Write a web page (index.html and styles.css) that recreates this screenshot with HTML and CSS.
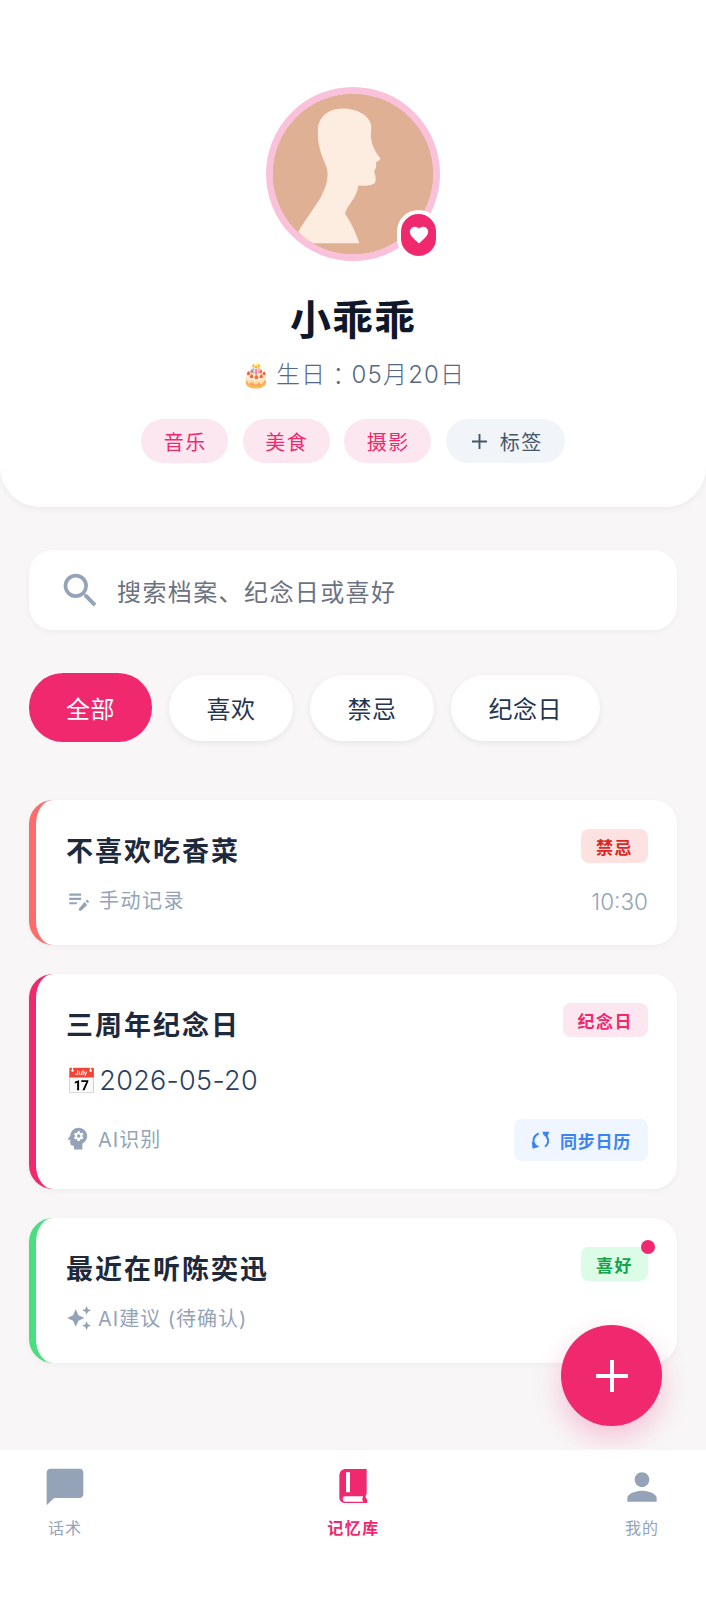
FILE: index.html
```html
<!DOCTYPE html>
<html lang="zh-CN">
<head>
<meta charset="utf-8">
<title>记忆库</title>
<link rel="stylesheet" href="styles.css">
</head>
<body>
<div class="app">
  <header class="hero">
    <div class="avatar">
      <svg class="avatar-art" viewBox="220 102 478 478">
        <rect x="220" y="102" width="478" height="478" fill="#dfb094"/>
        <path fill="#fcede0" d="M430 145C385 145 355 170 354 210C353 250 362 280 378 315C390 345 380 380 360 415C345 440 315 480 296 513C310 535 325 548 340 548H478C465 510 450 480 435 460C440 435 470 415 475 375C490 376 515 378 524 368C530 358 525 345 522 332C530 325 528 312 528 305C535 303 542 298 540 293C530 280 518 262 514 240C510 225 516 205 512 190C505 165 470 145 430 145Z"/>
      </svg>
      <span class="avatar-badge">
        <svg class="badge-heart" viewBox="0 0 24 24"><path fill="#fff" d="M12 21.35l-1.45-1.32C5.4 15.36 2 12.28 2 8.5 2 5.42 4.42 3 7.5 3c1.74 0 3.41.81 4.5 2.09C13.09 3.81 14.76 3 16.5 3 19.58 3 22 5.42 22 8.5c0 3.78-3.4 6.86-8.55 11.54L12 21.35z"/></svg>
      </span>
    </div>
    <h1 class="name">小乖乖</h1>
    <p class="birthday"><span class="emoji">🎂</span>生日<span class="colon">：</span>05月20日</p>
    <div class="tags">
      <span class="tag">音乐</span>
      <span class="tag">美食</span>
      <span class="tag">摄影</span>
      <span class="tag tag-add"><svg class="tag-plus" viewBox="0 0 16 16"><path d="M8 0v16M0 8h16" stroke="#475569" stroke-width="2" fill="none"/></svg>标签</span>
    </div>
  </header>

  <main class="content">
    <div class="search">
      <svg class="search-icon" viewBox="0 0 24 24"><path fill="#94a3b8" d="M15.5 14h-.79l-.28-.27A6.471 6.471 0 0 0 16 9.5 6.5 6.5 0 1 0 9.5 16c1.61 0 3.09-.59 4.23-1.57l.27.28v.79l5 4.99L20.49 19l-4.99-5zm-6 0C7.01 14 5 11.99 5 9.5S7.01 5 9.5 5 14 7.01 14 9.5 11.99 14 9.5 14z"/></svg>
      <span class="search-text">搜索档案、纪念日或喜好</span>
    </div>

    <div class="filters">
      <span class="filter filter-active">全部</span>
      <span class="filter">喜欢</span>
      <span class="filter">禁忌</span>
      <span class="filter">纪念日</span>
    </div>

    <div class="cards">
      <article class="card card-red">
        <div class="row">
          <h2 class="card-title">不喜欢吃香菜</h2>
          <span class="pill pill-red">禁忌</span>
        </div>
        <div class="row meta-row">
          <span class="source"><svg class="source-icon" viewBox="0 0 24 24"><path fill="#94a3b8" d="M3 10h11v2H3zm0-2h11V6H3zm0 8h7v-2H3zm15.01-3.13.71-.71c.39-.39 1.02-.39 1.41 0l.71.71c.39.39.39 1.02 0 1.41l-.71.71zm-.71.71L12 19.88V22h2.12l5.3-5.3z"/></svg><span class="source-text-manual">手动记录</span></span>
          <span class="time">10:30</span>
        </div>
      </article>

      <article class="card card-pink card-tall">
        <div class="row">
          <h2 class="card-title">三周年纪念日</h2>
          <span class="pill pill-pink">纪念日</span>
        </div>
        <p class="date"><span class="date-emoji">📅</span>2026-05-20</p>
        <div class="row foot-row">
          <span class="source source-raised"><svg class="source-icon source-icon-lg" viewBox="0 0 24 24"><path fill="#94a3b8" fill-rule="evenodd" d="M13 3C9.25 3 6.2 5.94 6.02 9.64L4.1 12.2c-.25.33-.01.8.4.8H6v3c0 1.1.9 2 2 2h1v3h7v-4.68c2.36-1.12 4-3.53 4-6.32 0-3.87-3.13-7-7-7zm3 7c0 .13-.01.26-.02.39l.83.66c.08.06.1.16.05.25l-.8 1.39c-.05.09-.16.12-.24.09l-.99-.4c-.21.16-.43.29-.67.39L14 13.83c-.01.1-.1.17-.2.17h-1.6c-.1 0-.18-.07-.2-.17l-.15-1.06c-.25-.1-.47-.23-.68-.39l-.99.4c-.09.03-.2 0-.25-.09l-.8-1.39c-.05-.08-.03-.19.05-.25l.84-.66c-.01-.13-.02-.26-.02-.39s.02-.27.04-.4l-.85-.66c-.08-.06-.1-.16-.05-.26l.8-1.38c.05-.09.15-.12.24-.09l1 .4c.2-.15.43-.29.67-.39L12 6.17c.02-.1.1-.17.2-.17h1.6c.1 0 .19.07.2.17l.15 1.06c.24.1.46.23.67.39l1-.4c.09-.03.2 0 .24.09l.8 1.38c.05.09.03.2-.05.26l-.85.66c.03.13.04.26.04.39z"/><circle cx="13" cy="10" r="1.43" fill="#94a3b8"/></svg>AI识别</span>
          <span class="sync"><svg class="sync-icon" viewBox="155 993 57 57"><path d="M178 1000C162 1008 158 1022 167 1036M192 1000C208 1010 212 1028 197 1040" fill="none" stroke="#3b82f6" stroke-width="6"/><path d="M157 1025 160 1046 180 1040ZM188 995 210 995 203 1012Z" fill="#3b82f6"/></svg>同步日历</span>
        </div>
      </article>

      <article class="card card-green">
        <div class="row">
          <h2 class="card-title">最近在听陈奕迅</h2>
          <span class="pill pill-green">喜好<span class="pill-dot"></span></span>
        </div>
        <div class="row meta-row">
          <span class="source source-ai"><svg class="source-icon" viewBox="0 0 24 24"><path fill="#94a3b8" d="M19 9l1.25-2.75L23 5l-2.75-1.25L19 1l-1.250 2.75L15 5l2.75 1.25zm-7.5.5L9 4 6.500 9.500 1 12l5.500 2.500L9 20l2.500-5.500L17 12zM19 15l-1.250 2.750L15 19l2.750 1.250L19 23l1.250-2.750L23 19l-2.750-1.250z"/></svg>AI建议 (待确认)</span>
        </div>
      </article>
    </div>
  </main>

  <button class="fab" type="button"><svg class="fab-plus" viewBox="0 0 32 32"><path d="M16 0v32M0 16h32" stroke="#fff" stroke-width="4" fill="none"/></svg></button>

  <nav class="tabbar">
    <div class="tab">
      <svg class="tab-icon" viewBox="0 0 24 24"><path fill="#94a3b8" d="M20 2H4c-1.100 0-2 .9-2 2v18l4-4h14c1.100 0 2-.9 2-2V4c0-1.100-.9-2-2-2z"/></svg>
      <span class="tab-label">话术</span>
    </div>
    <div class="tab tab-active">
      <svg class="tab-icon" viewBox="96 73 132 132"><path fill="#f0286e" fill-rule="evenodd" d="M138 85H200V160C197 163 196 167 197 170L202 178 201 187H135C124 187 118 180 118 170V105C118 93 126 85 138 85ZM138 95V155H150V95ZM136 167C130 167 128 170 128 175C128 180 131 183 136 183H190C186 178 186 172 190 167Z"/></svg>
      <span class="tab-label">记忆库</span>
    </div>
    <div class="tab">
      <svg class="tab-icon" viewBox="0 0 24 24"><path fill="#94a3b8" d="M12 12c2.210 0 4-1.790 4-4s-1.790-4-4-4-4 1.790-4 4 1.790 4 4 4zm0 2c-2.670 0-8 1.340-8 4v2h16v-2c0-2.660-5.330-4-8-4z"/></svg>
      <span class="tab-label">我的</span>
    </div>
  </nav>
</div>
</body>
</html>
```
FILE: styles.css
```css
* { box-sizing: border-box; }
html, body { margin: 0; padding: 0; }
body {
  font-family: "Inter", "Noto Sans CJK SC", "Noto Sans", sans-serif;
  background: #f8f6f7;
  color: #0f172a;
}
.app {
  position: relative;
  width: 706px;
  height: 1600px;
  display: flex;
  flex-direction: column;
  overflow: hidden;
}
.hero {
  height: 507px;
  padding-top: 87px;
  background: #fff;
  border-radius: 0 0 40px 40px;
  box-shadow: 0 2px 6px rgba(15, 23, 42, .05);
  display: flex;
  flex-direction: column;
  align-items: center;
}
.avatar {
  position: relative;
  width: 174px;
  height: 174px;
  border: 7px solid #f9c2da;
  border-radius: 50%;
  background: #dfb094;
}
.avatar-art {
  display: block;
  width: 160px;
  height: 160px;
  border-radius: 50%;
}
.avatar-badge {
  position: absolute;
  left: 124px;
  top: 116px;
  width: 43px;
  height: 50px;
  border: 4px solid #fff;
  border-radius: 22px;
  background: #f0286e;
  display: flex;
  align-items: center;
  justify-content: center;
}
.badge-heart { width: 22px; height: 22px; }
.name {
  margin: 32px 0 0;
  font-size: 41px;
  line-height: 54px;
  font-weight: 700;
  letter-spacing: 1px;
  color: #0f172a;
}
.birthday {
  margin: 12px 0 0;
  font-size: 24px;
  line-height: 32px;
  letter-spacing: 1.200px;
  font-weight: 300;
  color: #566a85;
  display: flex;
  align-items: center;
}
.colon { font-family: "Noto Sans CJK TC", sans-serif; }
.emoji { font-size: 24px; margin-right: 4px; }
.tags {
  display: flex;
  gap: 14.500px;
  margin-top: 28px;
}
.tag {
  height: 44px;
  padding: 0 21.500px 0 22.500px;
  border-radius: 22px;
  background: #fce7f0;
  color: #f0286e;
  font-size: 20px;
  letter-spacing: 1.500px;
  display: flex;
  align-items: center;
}
.tag-add {
  background: #f1f5f9;
  color: #475569;
  padding: 0 22px 0 26px;
}
.tag-plus { width: 15px; height: 15px; margin-right: 13px; }
.content {
  flex: 1;
  padding: 43px 29px 0;
}
.search {
  height: 80px;
  background: #fff;
  border-radius: 24px;
  box-shadow: 0 2px 6px rgba(15, 23, 42, .04);
  padding-left: 29px;
  display: flex;
  align-items: center;
}
.search-icon { width: 45px; height: 45px; flex: none; }
.search-text {
  margin-left: 14px;
  font-size: 24px;
  letter-spacing: 1.400px;
  color: #6b7280;
}
.filters {
  display: flex;
  align-items: center;
  gap: 17px;
  margin-top: 43px;
}
.filter {
  height: 66px;
  padding: 0 37.500px;
  border-radius: 33px;
  background: #fff;
  box-shadow: 0 2px 6px rgba(15, 23, 42, .07);
  font-size: 24px;
  letter-spacing: .500px;
  color: #243552;
  display: flex;
  align-items: center;
}
.filter-active {
  height: 69px;
  padding: 0 37px;
  border-radius: 34px;
  background: #f0286e;
  color: #fff;
  box-shadow: none;
}
.cards {
  display: flex;
  flex-direction: column;
  gap: 29px;
  margin-top: 58px;
}
.card {
  background: #fff;
  border-left: 7px solid;
  border-radius: 24px;
  box-shadow: 0 2px 6px rgba(15, 23, 42, .04);
  padding: 29px 29px 30px 30px;
}
.card-red { border-left-color: #ff6b6b; }
.card-pink { border-left-color: #f0286e; }
.card-green { border-left-color: #4ade80; }
.card-tall { padding-bottom: 28px; }
.row {
  display: flex;
  justify-content: space-between;
  align-items: flex-start;
}
.card-title {
  margin: 6px 0 -6px;
  font-size: 27px;
  line-height: 34px;
  font-weight: 700;
  letter-spacing: 2px;
  color: #1e293b;
}
.pill {
  position: relative;
  height: 34px;
  padding: 0 15px;
  border-radius: 8px;
  font-size: 17px;
  font-weight: 700;
  letter-spacing: 1.500px;
  display: flex;
  align-items: center;
}
.pill-red { background: #fee2e2; color: #dc2626; }
.pill-pink { background: #fce7f0; color: #f0286e; }
.pill-green { background: #dcfce7; color: #16a34a; }
.pill-dot {
  position: absolute;
  right: -7px;
  top: -7px;
  width: 14px;
  height: 14px;
  border-radius: 50%;
  background: #f0286e;
}
.meta-row { margin-top: 21px; height: 31px; align-items: center; }
.foot-row { margin-top: 21px; height: 42px; align-items: center; }
.source {
  display: flex;
  align-items: center;
  font-size: 20px;
  letter-spacing: 1px;
  color: #94a3b8;
}
.source-raised { margin-bottom: 3px; }
.source-icon { width: 26px; height: 26px; flex: none; margin-right: 5px; }
.source-ai .source-icon { margin-right: 6px; }
.source-icon-lg { width: 29px; height: 29px; margin: 0 6px 0 -3px; }
.source-text-manual { margin-left: 2px; letter-spacing: 1.500px; }
.time {
  padding-top: 4px;
  font-size: 22.500px;
  font-weight: 300;
  color: #94a3b8;
}
.date {
  margin: 27px 0 0;
  height: 34px;
  font-size: 27px;
  line-height: 34px;
  font-weight: 300;
  letter-spacing: .300px;
  color: #2a4060;
  display: flex;
  align-items: center;
}
.date-emoji { font-size: 25px; margin-right: 2px; }
.sync {
  height: 42px;
  width: 134px;
  border-radius: 8px;
  background: #eff6ff;
  color: #3b82f6;
  font-size: 17px;
  font-weight: 700;
  letter-spacing: .800px;
  display: flex;
  align-items: center;
  justify-content: center;
}
.sync-icon { width: 19px; height: 19px; margin-right: 10px; }
.fab {
  position: absolute;
  left: 561px;
  top: 1325px;
  width: 101px;
  height: 101px;
  padding: 0;
  border: 0;
  border-radius: 50%;
  background: #f0286e;
  box-shadow: 0 12px 28px rgba(240, 40, 110, .25);
  display: flex;
  align-items: center;
  justify-content: center;
}
.fab-plus { width: 32px; height: 32px; }
.tabbar {
  position: relative;
  height: 151px;
  padding: 15px 42px 0 43px;
  background: rgba(255, 255, 255, .92);
  border-top: 1px solid #f3f5f9;
  display: flex;
  justify-content: space-between;
}
.tab {
  width: 44px;
  display: flex;
  flex-direction: column;
  align-items: center;
}
.tab-icon { display: block; width: 44px; height: 44px; flex: none; }
.tab-label {
  margin-top: 7px;
  font-size: 16px;
  line-height: 24px;
  letter-spacing: 1px;
  white-space: nowrap;
  color: #94a3b8;
}
.tab-active .tab-label { color: #f0286e; font-weight: 700; letter-spacing: 1.500px; }
```
